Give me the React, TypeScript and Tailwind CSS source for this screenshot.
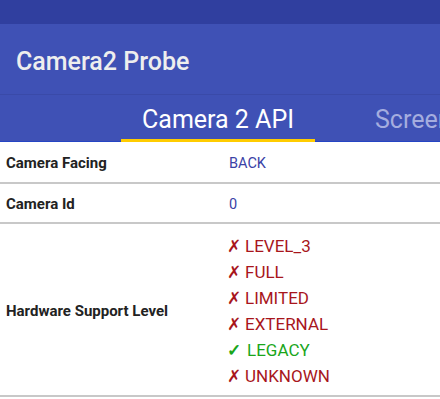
import React from "react";

const levels: { ok: boolean; name: string }[] = [
  { ok: false, name: "LEVEL_3" },
  { ok: false, name: "FULL" },
  { ok: false, name: "LIMITED" },
  { ok: false, name: "EXTERNAL" },
  { ok: true, name: "LEGACY" },
  { ok: false, name: "UNKNOWN" },
];

export default function App() {
  return (
    <div
      className="w-[440px] h-[399px] overflow-hidden bg-white"
      style={{ fontFamily: "Roboto, 'Noto Sans', sans-serif" }}
    >
      <div className="h-[24px] bg-[#303F9F]" />
      <div className="h-[71px] bg-[#3F51B5] flex items-center pl-[16px] pt-[5px] border-b border-[#3a4aa8]">
        <span className="text-[25px] font-medium text-[#eeeeee] leading-none">Camera2 Probe</span>
      </div>
      <div className="h-[47px] bg-[#3F51B5] flex items-stretch border-b border-[#2545c4]">
        <div className="w-[121px] shrink-0" />
        <div className="relative w-[194px] shrink-0 flex items-center justify-center pt-[2px]">
          <span className="text-[25px] text-white leading-none">Camera 2 API</span>
          <div className="absolute left-0 right-0 bottom-[-1px] h-[3px] bg-[#FFCC00]" />
        </div>
        <div className="flex items-center pl-[60px] pt-[2px] whitespace-nowrap">
          <span className="text-[25px] text-[#a5addf] leading-none">Screen Info</span>
        </div>
      </div>
      <div className="flex items-center h-[42px] pt-[3px] border-b-2 border-[#c8c8c8]">
        <div className="w-[229px] pl-[6px] text-[15px] font-bold text-[#222]">Camera Facing</div>
        <div className="text-[14.5px] text-[#3a42a6]">BACK</div>
      </div>
      <div className="flex items-center h-[40px] pt-[3px] border-b-2 border-[#c8c8c8]">
        <div className="w-[229px] pl-[6px] text-[15px] font-bold text-[#222]">Camera Id</div>
        <div className="text-[14.5px] text-[#3a42a6]">0</div>
      </div>
      <div className="flex items-center h-[173px] pt-[3px] border-b-2 border-[#c8c8c8]">
        <div className="w-[229px] pl-[6px] text-[15px] font-bold text-[#222]">Hardware Support Level</div>
        <div className="flex flex-col">
          {levels.map((l) => (
            <div
              key={l.name}
              className={
                "h-[26px] flex items-center text-[17px] leading-none " +
                (l.ok ? "text-[#1aa61a]" : "text-[#a8161c]")
              }
            >
              <span className={l.ok ? "-ml-[2px] w-[20px] font-bold" : "-ml-[2px] w-[18px]"}>
                {l.ok ? "✓" : "✗"}
              </span>
              <span>{l.name}</span>
            </div>
          ))}
        </div>
      </div>
    </div>
  );
}
